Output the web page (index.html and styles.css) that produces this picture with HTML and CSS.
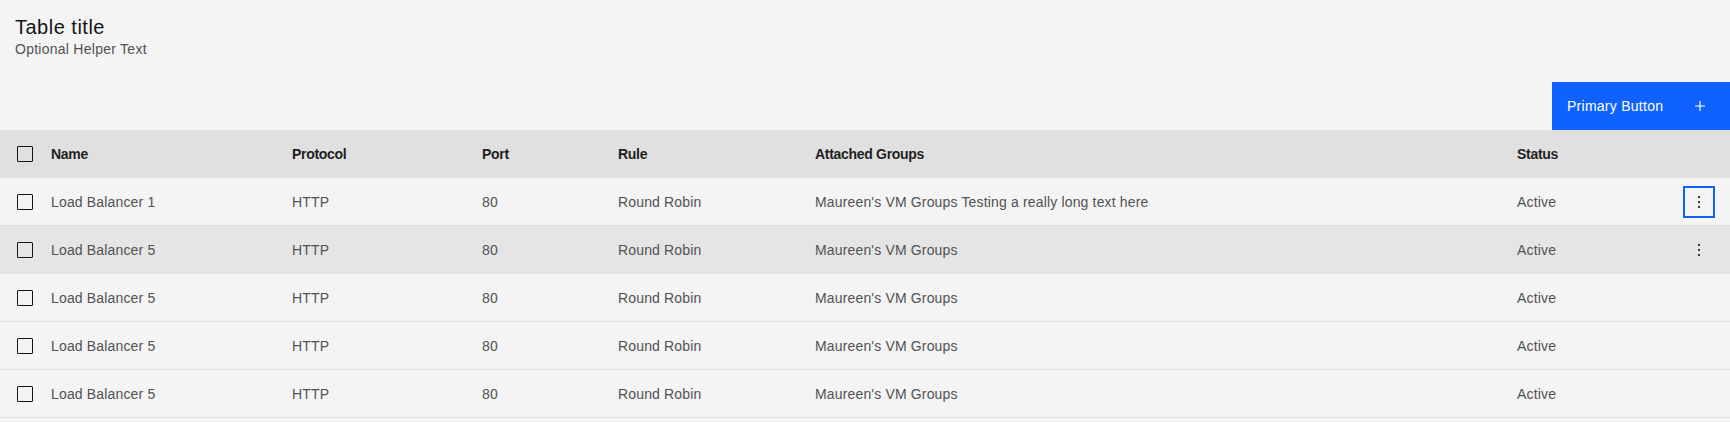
FILE: index.html
```html
<!DOCTYPE html>
<html lang="en">
<head>
<meta charset="utf-8">
<title>Data table</title>
<link rel="stylesheet" href="styles.css">
</head>
<body>
<div class="table-container">
  <div class="table-header">
    <h4 class="table-title">Table title</h4>
    <p class="table-desc">Optional Helper Text</p>
  </div>
  <section class="toolbar">
    <button class="btn-primary" type="button">
      <span>Primary Button</span>
      <svg class="btn-icon" width="10" height="10" viewBox="0 0 10 10" aria-hidden="true">
        <path d="M5 0v10M0 5h10" stroke="#ffffff" stroke-width="1.2" fill="none"/>
      </svg>
    </button>
  </section>
  <div class="data-table" role="table">
    <div class="row head" role="row">
      <div class="cell check"><span class="checkbox"></span></div>
      <div class="cell">Name</div>
      <div class="cell">Protocol</div>
      <div class="cell">Port</div>
      <div class="cell">Rule</div>
      <div class="cell">Attached Groups</div>
      <div class="cell">Status</div>
      <div class="cell menu"></div>
    </div>
    <div class="row" role="row">
      <div class="cell check"><span class="checkbox"></span></div>
      <div class="cell">Load Balancer 1</div>
      <div class="cell">HTTP</div>
      <div class="cell">80</div>
      <div class="cell">Round Robin</div>
      <div class="cell">Maureen's VM Groups Testing a really long text here</div>
      <div class="cell">Active</div>
      <div class="cell menu">
        <span class="overflow focused">
          <svg width="4" height="14" viewBox="0 0 4 14" aria-hidden="true"><rect x="1" y="1" width="2" height="2" fill="#393939"/><rect x="1" y="6" width="2" height="2" fill="#393939"/><rect x="1" y="11" width="2" height="2" fill="#393939"/></svg>
        </span>
      </div>
    </div>
    <div class="row hover" role="row">
      <div class="cell check"><span class="checkbox"></span></div>
      <div class="cell">Load Balancer 5</div>
      <div class="cell">HTTP</div>
      <div class="cell">80</div>
      <div class="cell">Round Robin</div>
      <div class="cell">Maureen's VM Groups</div>
      <div class="cell">Active</div>
      <div class="cell menu">
        <span class="overflow">
          <svg width="4" height="14" viewBox="0 0 4 14" aria-hidden="true"><rect x="1" y="1" width="2" height="2" fill="#393939"/><rect x="1" y="6" width="2" height="2" fill="#393939"/><rect x="1" y="11" width="2" height="2" fill="#393939"/></svg>
        </span>
      </div>
    </div>
    <div class="row" role="row">
      <div class="cell check"><span class="checkbox"></span></div>
      <div class="cell">Load Balancer 5</div>
      <div class="cell">HTTP</div>
      <div class="cell">80</div>
      <div class="cell">Round Robin</div>
      <div class="cell">Maureen's VM Groups</div>
      <div class="cell">Active</div>
      <div class="cell menu"></div>
    </div>
    <div class="row" role="row">
      <div class="cell check"><span class="checkbox"></span></div>
      <div class="cell">Load Balancer 5</div>
      <div class="cell">HTTP</div>
      <div class="cell">80</div>
      <div class="cell">Round Robin</div>
      <div class="cell">Maureen's VM Groups</div>
      <div class="cell">Active</div>
      <div class="cell menu"></div>
    </div>
    <div class="row" role="row">
      <div class="cell check"><span class="checkbox"></span></div>
      <div class="cell">Load Balancer 5</div>
      <div class="cell">HTTP</div>
      <div class="cell">80</div>
      <div class="cell">Round Robin</div>
      <div class="cell">Maureen's VM Groups</div>
      <div class="cell">Active</div>
      <div class="cell menu"></div>
    </div>
  </div>
</div>
</body>
</html>
```

FILE: styles.css
```css
* { box-sizing: border-box; }

html, body {
  margin: 0;
  padding: 0;
  background: #f4f4f4;
}

body {
  font-family: "Liberation Sans", Arial, sans-serif;
  color: #161616;
  letter-spacing: 0.16px;
}

.table-container {
  width: 1730px;
  background: #f4f4f4;
}

.table-header {
  padding: 14px 16px 24px 15px;
}

.table-title {
  margin: 0;
  font-size: 20px;
  line-height: 26px;
  font-weight: 400;
  color: #161616;
  letter-spacing: 0.5px;
}

.table-desc {
  margin: 0;
  font-size: 14px;
  line-height: 18px;
  color: #525252;
  letter-spacing: 0.26px;
}

.toolbar {
  display: flex;
  justify-content: flex-end;
  height: 48px;
}

.btn-primary {
  display: flex;
  align-items: center;
  justify-content: space-between;
  width: 178px;
  height: 48px;
  padding: 0 25px 0 15px;
  border: 0;
  background: #0f62fe;
  color: #ffffff;
  font-family: inherit;
  font-size: 14px;
  letter-spacing: 0.26px;
  cursor: pointer;
}

.btn-icon { display: block; }

.data-table {
  display: flex;
  flex-direction: column;
}

.row {
  display: grid;
  grid-template-columns: 35px 241px 190px 136px 197px 702px 174px 55px;
  height: 48px;
  background: #f4f4f4;
  border-bottom: 1px solid #e0e0e0;
  font-size: 14px;
  color: #525252;
}

.row.head {
  background: #e0e0e0;
  border-bottom: 0;
  font-weight: 700;
  color: #1f1f1f;
  letter-spacing: -0.3px;
}

.row.hover {
  background: #e5e5e5;
  border-bottom-color: #e5e5e5;
}

.cell {
  display: flex;
  align-items: center;
  padding-left: 16px;
  white-space: nowrap;
  overflow: hidden;
}

.cell.check {
  padding-left: 17px;
}

.checkbox {
  display: block;
  width: 16px;
  height: 16px;
  border: 1px solid #161616;
  border-radius: 1px;
}

.cell.menu {
  padding-left: 8px;
}

.overflow {
  display: flex;
  align-items: center;
  justify-content: center;
  width: 32px;
  height: 32px;
  border: 2px solid transparent;
}

.overflow.focused {
  border-color: #0f62fe;
}

.overflow svg { display: block; }
```
